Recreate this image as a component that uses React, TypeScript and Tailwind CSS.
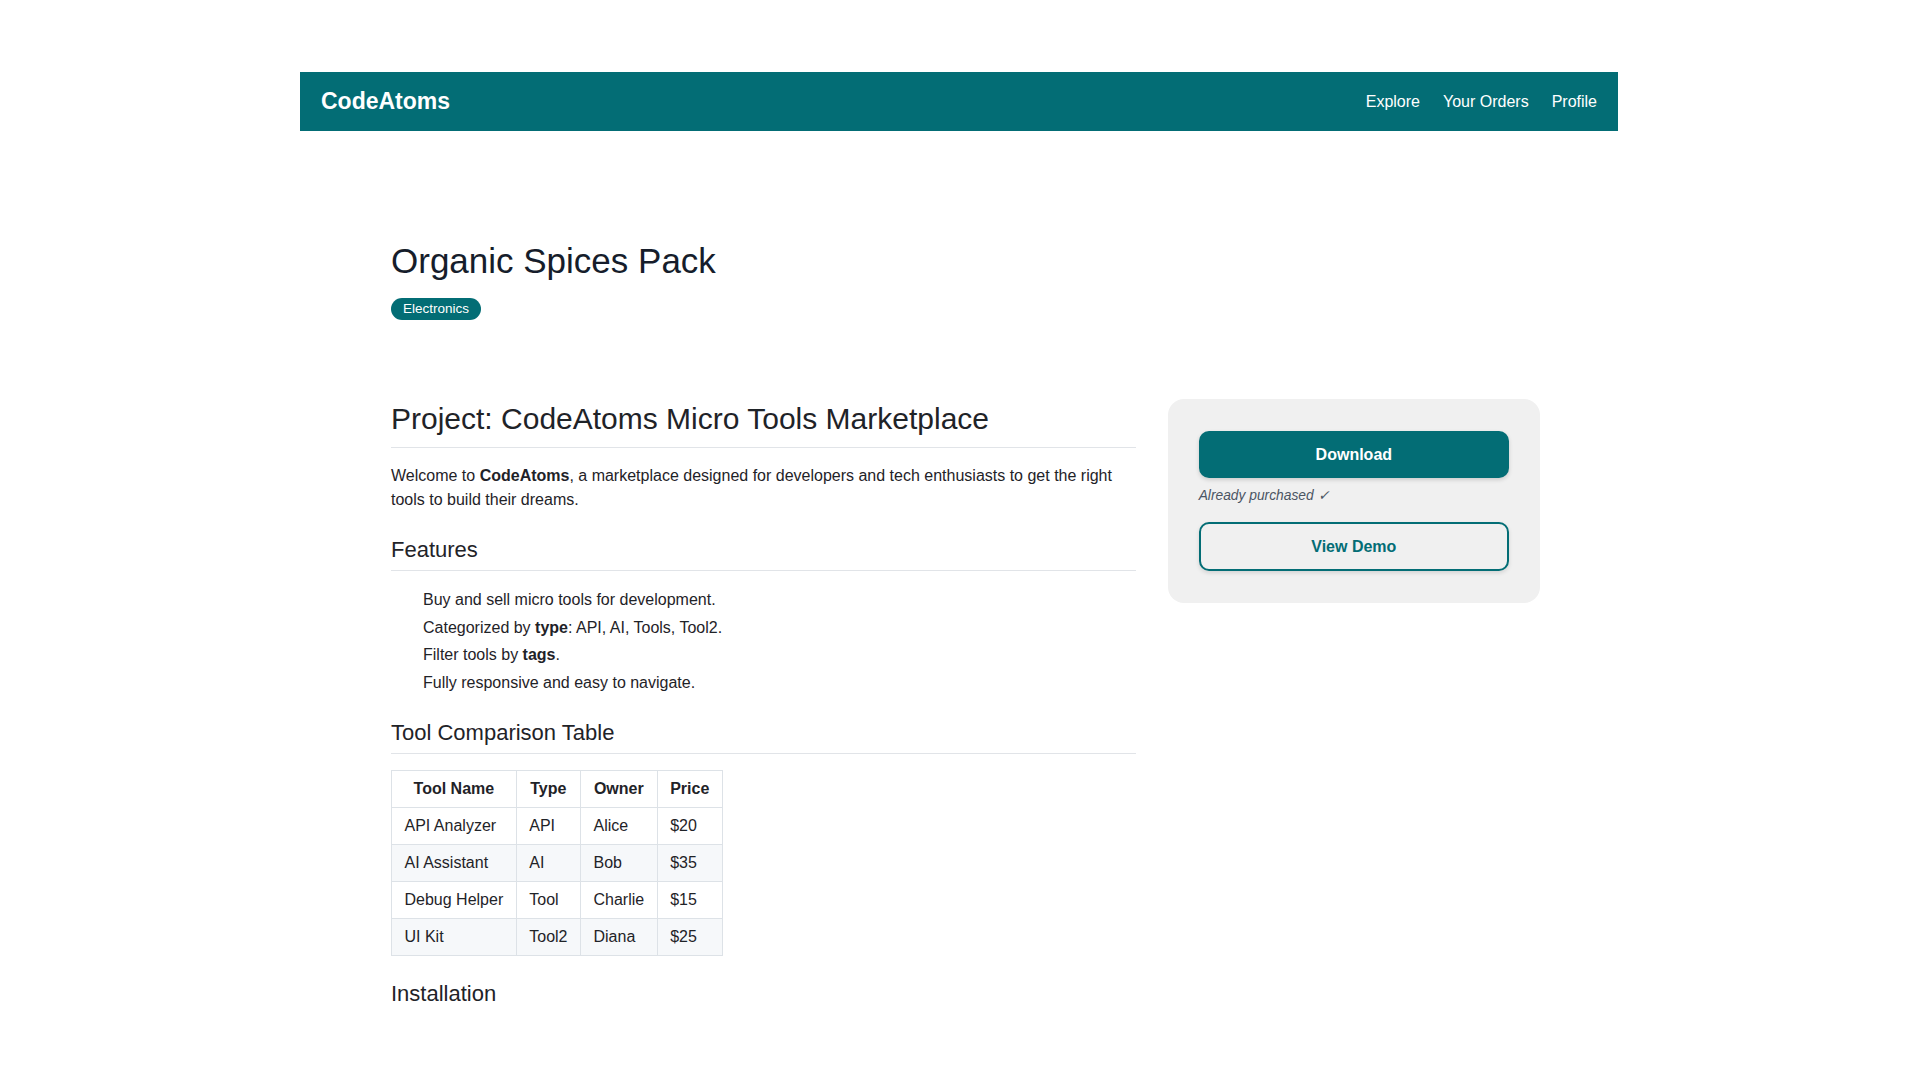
import React from "react";

const rows = [
  ["API Analyzer", "API", "Alice", "$20"],
  ["AI Assistant", "AI", "Bob", "$35"],
  ["Debug Helper", "Tool", "Charlie", "$15"],
  ["UI Kit", "Tool2", "Diana", "$25"],
];

export default function App() {
  return (
    <div className="min-h-screen bg-white font-['Liberation_Sans',Arial,sans-serif]">
      <div className="mx-auto w-[1320px] pt-[72px]">
        <nav className="flex h-[59px] w-[1318px] items-center justify-between bg-[#036d75] px-[21px]">
          <div className="text-[23px] font-bold leading-none text-white">CodeAtoms</div>
          <div className="flex items-center gap-[23px] text-[16px] text-white">
            <span>Explore</span>
            <span>Your Orders</span>
            <span>Profile</span>
          </div>
        </nav>

        <main className="pl-[91px] pr-[80px] pt-[109px]">
          <h1 className="text-[35px] leading-[42px] font-normal text-[#161d2b]">Organic Spices Pack</h1>
          <div className="mt-[16px] flex">
            <span className="flex h-[22px] items-center rounded-full bg-[#036d75] px-[12px] text-[13.5px] text-white">
              Electronics
            </span>
          </div>

          <div className="mt-[79px] grid grid-cols-[2fr_1fr] gap-8">
            <article className="pt-[1px] text-[16px] leading-6 text-[#1f2328]">
              <h2 className="border-b border-[#e1e4e8] pb-[9.6px] text-[30px] leading-[37.5px] font-normal">
                Project: CodeAtoms Micro Tools Marketplace
              </h2>
              <p className="mt-4">
                Welcome to <strong>CodeAtoms</strong>, a marketplace designed for developers and tech enthusiasts to get the right tools to build their dreams.
              </p>
              <h3 className="mt-6 border-b border-[#e1e4e8] pb-[6.6px] text-[22px] leading-[27.5px] font-normal">Features</h3>
              <ul className="mt-[17px] flex flex-col gap-[3.5px] pl-8">
                <li>Buy and sell micro tools for development.</li>
                <li>
                  Categorized by <strong>type</strong>: API, AI, Tools, Tool2.
                </li>
                <li>
                  Filter tools by <strong>tags</strong>.
                </li>
                <li>Fully responsive and easy to navigate.</li>
              </ul>
              <h3 className="mt-6 border-b border-[#e1e4e8] pb-[6.6px] text-[22px] leading-[27.5px] font-normal">
                Tool Comparison Table
              </h3>
              <table className="mt-4 border-collapse">
                <thead>
                  <tr className="bg-white">
                    {["Tool Name", "Type", "Owner", "Price"].map((h) => (
                      <th key={h} className="border border-[#dde2e7] px-[12.5px] py-[6px] text-center font-bold text-[#1f2328]">
                        {h}
                      </th>
                    ))}
                  </tr>
                </thead>
                <tbody>
                  {rows.map((r, i) => (
                    <tr key={r[0]} className={i % 2 === 1 ? "bg-[#f6f8fa]" : "bg-white"}>
                      {r.map((c) => (
                        <td key={c} className="border border-[#dde2e7] px-[12.5px] py-[6px]">
                          {c}
                        </td>
                      ))}
                    </tr>
                  ))}
                </tbody>
              </table>
              <h3 className="mt-6 pb-[6.6px] text-[22px] leading-[27.5px] font-normal">Installation</h3>
            </article>

            <aside className="self-start rounded-[16px] bg-[#f0f0f0] px-[31px] py-8">
              <button className="flex h-[47px] w-full items-center justify-center rounded-[10px] bg-[#036d75] text-[16px] font-bold text-white shadow-[0_2px_4px_rgba(0,0,0,0.15)]">
                Download
              </button>
              <div className="mt-2 text-[13.8px] leading-5 italic text-[#4b5563]">Already purchased ✓</div>
              <button className="mt-4 flex h-[49px] w-full items-center justify-center rounded-[10px] border-2 border-[#036d75] bg-transparent text-[16px] font-bold text-[#036d75] shadow-[0_2px_4px_rgba(0,0,0,0.12)]">
                View Demo
              </button>
            </aside>
          </div>
        </main>
      </div>
    </div>
  );
}
